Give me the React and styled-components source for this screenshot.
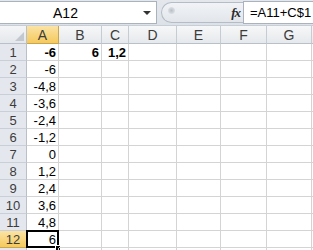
import React from "react";
import styled, { createGlobalStyle } from "styled-components";

const Global = createGlobalStyle`
  html, body { margin: 0; padding: 0; background: #ffffff; }
  body { font-family: Arial, "Liberation Sans", sans-serif; overflow: hidden; }
`;

const Page = styled.div`
  width: 313px;
  height: 250px;
  overflow: hidden;
  background: #ffffff;
`;

const TopBar = styled.div`
  height: 26px;
  box-sizing: border-box;
  display: flex;
  align-items: flex-start;
  padding-top: 1px;
  background: linear-gradient(#e4e8ed, #dde2e8);
  border-bottom: 1px solid #c8ced6;
`;

const NameBox = styled.div`
  width: 157px;
  height: 23px;
  box-sizing: border-box;
  border: 1px solid #a9b2bd;
  border-left: none;
  background: #ffffff;
  display: flex;
  align-items: center;
  font-size: 14px;
  color: #000;
`;

const NameText = styled.span`
  flex: 1;
  text-align: center;
  padding-right: 12px;
`;

const DropArrow = styled.span`
  width: 0;
  height: 0;
  border-left: 4px solid transparent;
  border-right: 4px solid transparent;
  border-top: 4px solid #333;
  margin-right: 5px;
`;

const Capsule = styled.div`
  margin-left: 4px;
  margin-top: 1px;
  width: 82px;
  height: 21px;
  box-sizing: border-box;
  border: 1px solid #b4bcc6;
  border-right: none;
  border-radius: 11px 0 0 11px;
  background: linear-gradient(#f1f3f6, #e2e6eb);
  display: flex;
  align-items: center;
  justify-content: space-between;
  padding: 0 3px 0 6px;
`;

const Grip = styled.span`
  width: 7px;
  height: 7px;
  border-radius: 50%;
  background: radial-gradient(#b9bfc7, rgba(200, 206, 214, 0));
  margin-top: -4px;
`;

const Fx = styled.span`
  font-family: "Liberation Serif", "Times New Roman", serif;
  font-style: italic;
  font-weight: bold;
  font-size: 13px;
  color: #2a2a2a;
  letter-spacing: -1px;
`;

const FormulaBox = styled.div`
  flex: 1;
  height: 23px;
  box-sizing: border-box;
  border: 1px solid #a9b2bd;
  border-right: none;
  background: #ffffff;
  display: flex;
  align-items: center;
  padding-left: 6px;
  font-size: 13px;
  color: #000;
  white-space: nowrap;
  overflow: hidden;
`;

const Grid = styled.div`
  display: grid;
  grid-template-columns: 27px 32px 43px 27px 48px 44px 46px 45px 20px;
  grid-template-rows: 18px repeat(13, 17px);
`;

const Corner = styled.div`
  box-sizing: border-box;
  background: linear-gradient(#f4f5f7, #e4e7eb);
  border-right: 1px solid #b9c0c9;
  border-bottom: 1px solid #b9c0c9;
  position: relative;
  &::after {
    content: "";
    position: absolute;
    right: 2px;
    bottom: 2px;
    width: 0;
    height: 0;
    border-left: 9px solid transparent;
    border-bottom: 9px solid #c3c8cf;
  }
`;

const ColHead = styled.div`
  box-sizing: border-box;
  background: ${(p) =>
    p.$sel
      ? "linear-gradient(#fbe3a4, #f5c95c)"
      : "linear-gradient(#f6f7f8, #e6e9ec)"};
  border-right: 1px solid ${(p) => (p.$sel ? "#c9a64e" : "#c6ccd3")};
  border-bottom: 1px solid ${(p) => (p.$sel ? "#c9a64e" : "#b9c0c9")};
  display: flex;
  align-items: center;
  justify-content: center;
  font-size: 14px;
  color: #3c3c3c;
`;

const RowHead = styled.div`
  box-sizing: border-box;
  background: ${(p) =>
    p.$sel ? "linear-gradient(#fbe3a4, #f5c95c)" : "#e4e8ee"};
  border-right: 1px solid ${(p) => (p.$sel ? "#c9a64e" : "#b9c0c9")};
  border-bottom: 1px solid ${(p) => (p.$sel ? "#c9a64e" : "#c9cfd7")};
  display: flex;
  align-items: center;
  justify-content: center;
  font-size: 13px;
  color: #3c3c3c;
`;

const Cell = styled.div`
  box-sizing: border-box;
  border-right: 1px solid #d4d4d4;
  border-bottom: 1px solid #d4d4d4;
  display: flex;
  align-items: center;
  justify-content: flex-end;
  padding-right: 2px;
  font-size: 13px;
  font-weight: ${(p) => (p.$bold ? "bold" : "normal")};
  color: #000;
  white-space: nowrap;
  position: relative;
`;

const ActiveCell = styled(Cell)`
  &::before {
    content: "";
    position: absolute;
    left: -1px;
    top: -1px;
    right: -1px;
    bottom: -1px;
    border: 2px solid #000;
    pointer-events: none;
  }
  &::after {
    content: "";
    position: absolute;
    right: -3px;
    bottom: -4px;
    width: 4px;
    height: 4px;
    background: #000;
    border: 1px solid #fff;
  }
`;

const cols = ["A", "B", "C", "D", "E", "F", "G", "H"];
const colA = ["-6", "-6", "-4,8", "-3,6", "-2,4", "-1,2", "0", "1,2", "2,4", "3,6", "4,8", "6"];

export default function App() {
  const rows = [];
  for (let r = 1; r <= 13; r++) {
    rows.push(
      <RowHead key={`h${r}`} $sel={r === 12}>
        {r <= 12 ? r : ""}
      </RowHead>
    );
    cols.forEach((c) => {
      let val = "";
      let bold = false;
      if (c === "A" && r <= 12) {
        val = colA[r - 1];
        bold = r === 1;
      }
      if (r === 1 && c === "B") {
        val = "6";
        bold = true;
      }
      if (r === 1 && c === "C") {
        val = "1,2";
        bold = true;
      }
      const C = r === 12 && c === "A" ? ActiveCell : Cell;
      rows.push(
        <C key={`${c}${r}`} $bold={bold}>
          {val}
        </C>
      );
    });
  }
  return (
    <Page>
      <Global />
      <TopBar>
        <NameBox>
          <NameText>A12</NameText>
          <DropArrow />
        </NameBox>
        <Capsule>
          <Grip />
          <Fx>fx</Fx>
        </Capsule>
        <FormulaBox>=A11+C$1</FormulaBox>
      </TopBar>
      <Grid>
        <Corner />
        {cols.map((c) => (
          <ColHead key={c} $sel={c === "A"}>
            {c === "H" ? "" : c}
          </ColHead>
        ))}
        {rows}
      </Grid>
    </Page>
  );
}
